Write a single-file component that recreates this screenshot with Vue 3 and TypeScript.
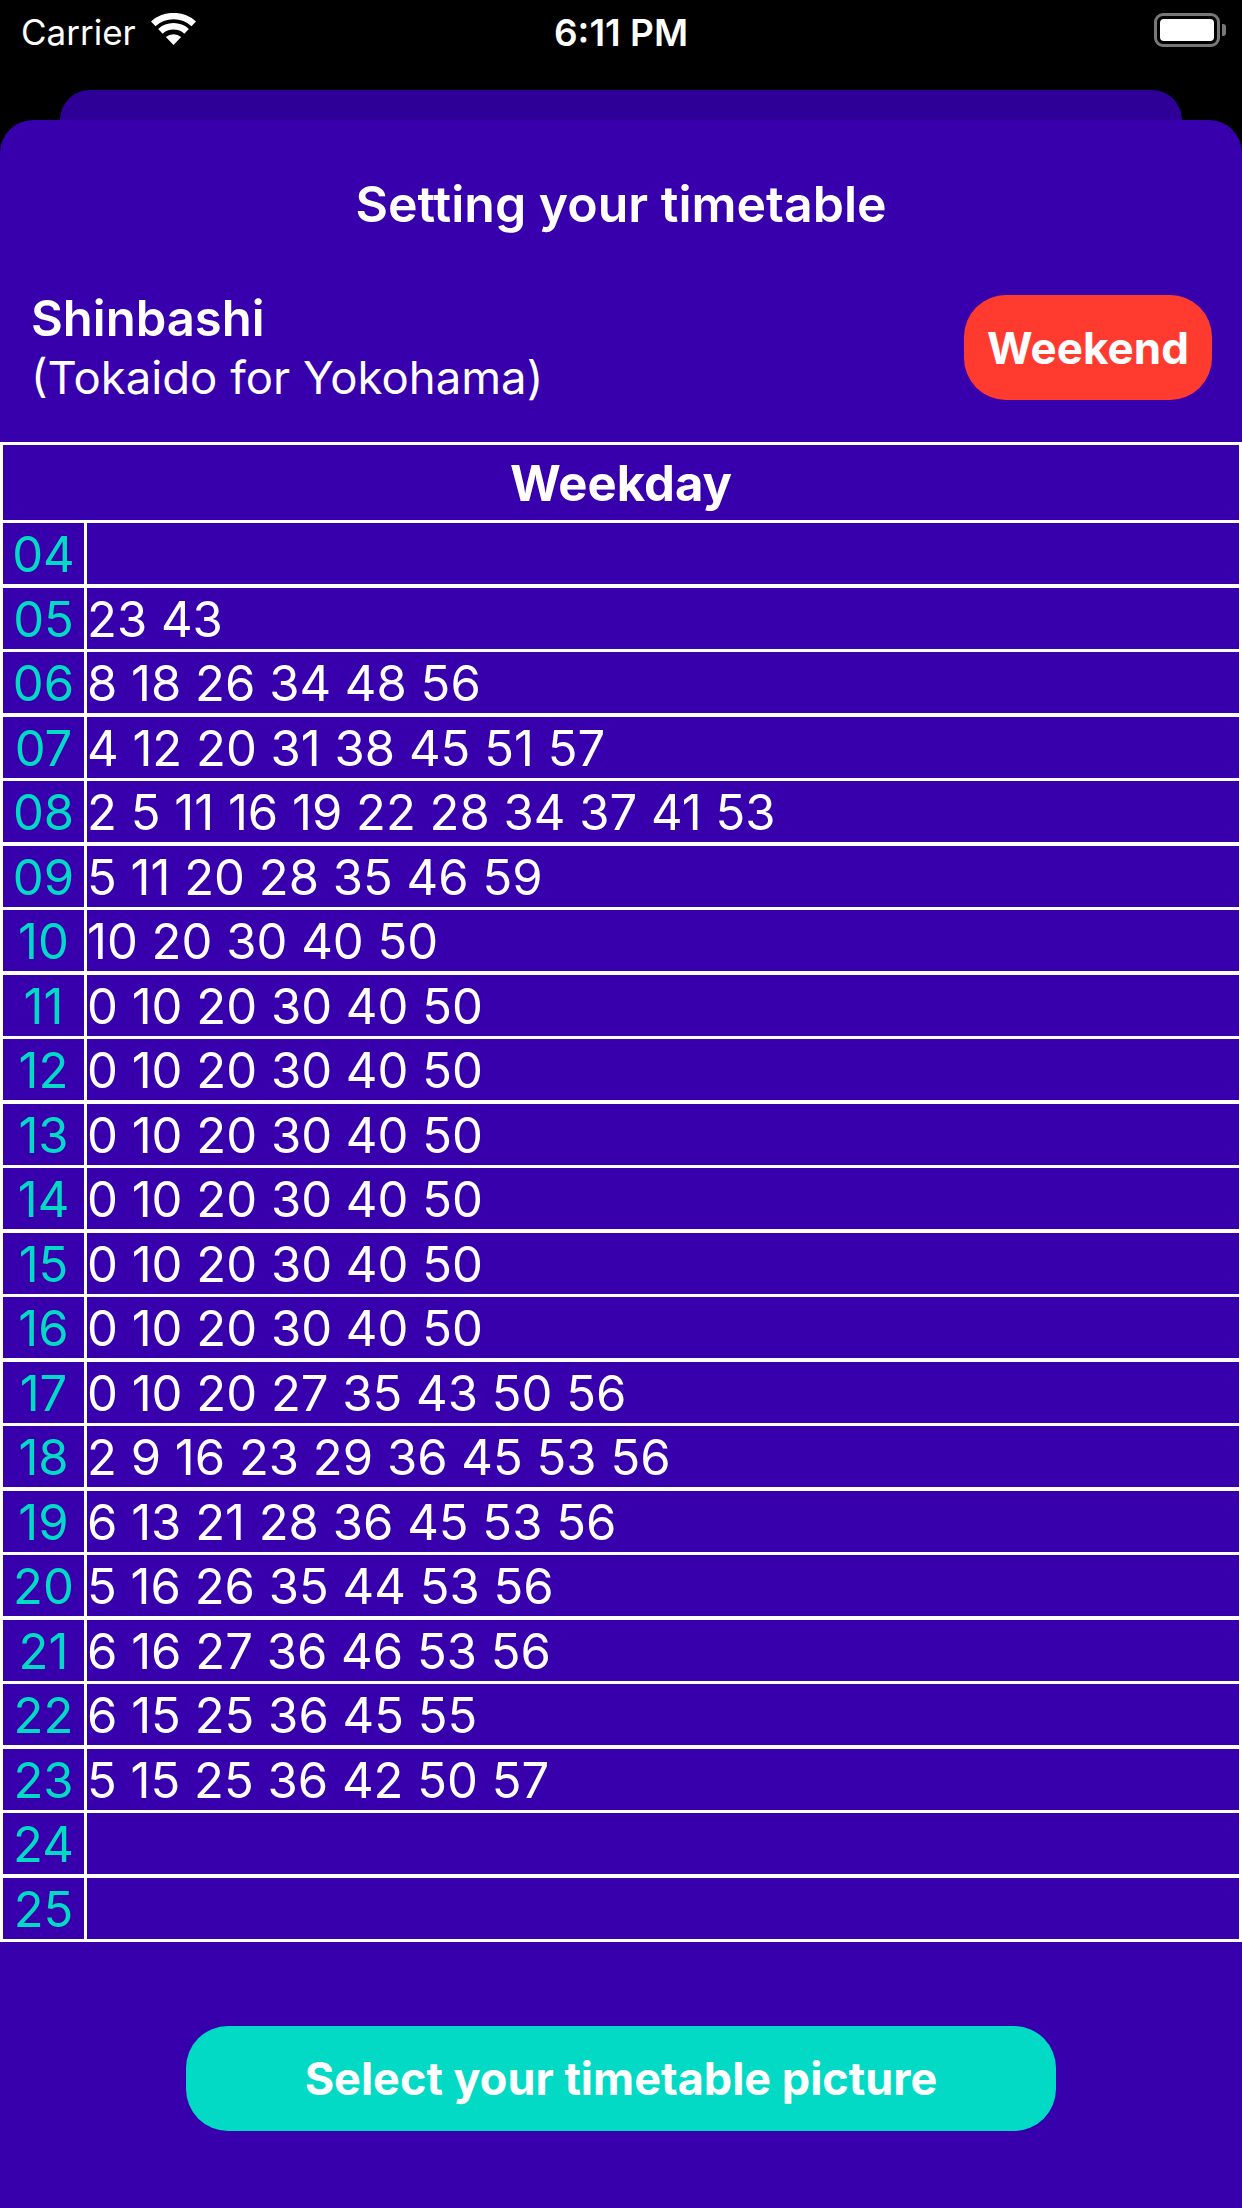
<template>
  <div class="screen">
    <div class="status-bar">
      <div class="status-left">
        <span>Carrier</span>
        <svg class="wifi" width="47" height="32" viewBox="0 0 46 34" preserveAspectRatio="none">
          <path d="M23 34 L15.5 25.5 A11 11 0 0 1 30.5 25.5 Z" fill="#fff" />
          <path d="M12.4 22 L8 17 A21 21 0 0 1 38 17 L33.6 22 A15 15 0 0 0 12.4 22 Z" fill="#fff" />
          <path d="M5.4 14 L1 9 A31 31 0 0 1 45 9 L40.6 14 A24.5 24.5 0 0 0 5.4 14 Z" fill="#fff" />
        </svg>
      </div>
      <span class="status-time">6:11 PM</span>
      <div class="battery">
        <div class="battery-body"><div class="battery-fill"></div></div>
        <div class="battery-nub"></div>
      </div>
    </div>

    <div class="sheet-behind"></div>

    <main class="sheet">
      <h1 class="title">Setting your timetable</h1>

      <div class="station-row">
        <div class="station">
          <div class="station-name">Shinbashi</div>
          <div class="station-line">(Tokaido for Yokohama)</div>
        </div>
        <button class="weekend-btn">Weekend</button>
      </div>

      <div class="timetable">
        <div class="day-header">Weekday</div>
        <div v-for="row in rows" :key="row.hour" class="row">
          <div class="hour">{{ row.hour }}</div>
          <div class="minutes">{{ row.minutes }}</div>
        </div>
      </div>

      <div class="footer">
        <button class="select-btn">Select your timetable picture</button>
      </div>
    </main>
  </div>
</template>

<script setup lang="ts">
interface Row {
  hour: string
  minutes: string
}

const rows: Row[] = [
  { hour: '04', minutes: '' },
  { hour: '05', minutes: '23 43' },
  { hour: '06', minutes: '8 18 26 34 48 56' },
  { hour: '07', minutes: '4 12 20 31 38 45 51 57' },
  { hour: '08', minutes: '2 5 11 16 19 22 28 34 37 41 53' },
  { hour: '09', minutes: '5 11 20 28 35 46 59' },
  { hour: '10', minutes: '10 20 30 40 50' },
  { hour: '11', minutes: '0 10 20 30 40 50' },
  { hour: '12', minutes: '0 10 20 30 40 50' },
  { hour: '13', minutes: '0 10 20 30 40 50' },
  { hour: '14', minutes: '0 10 20 30 40 50' },
  { hour: '15', minutes: '0 10 20 30 40 50' },
  { hour: '16', minutes: '0 10 20 30 40 50' },
  { hour: '17', minutes: '0 10 20 27 35 43 50 56' },
  { hour: '18', minutes: '2 9 16 23 29 36 45 53 56' },
  { hour: '19', minutes: '6 13 21 28 36 45 53 56' },
  { hour: '20', minutes: '5 16 26 35 44 53 56' },
  { hour: '21', minutes: '6 16 27 36 46 53 56' },
  { hour: '22', minutes: '6 15 25 36 45 55' },
  { hour: '23', minutes: '5 15 25 36 42 50 57' },
  { hour: '24', minutes: '' },
  { hour: '25', minutes: '' },
]
</script>

<style>
html, body { background: #000; }
</style>

<style scoped>
.screen {
  width: 1242px;
  height: 2208px;
  display: flex;
  flex-direction: column;
  background: #000;
  color: #fff;
  font-family: Inter, "Noto Sans", sans-serif;
  overflow: hidden;
}
.status-bar {
  height: 90px;
  flex: none;
  padding: 0 16px 26px 21px;
  box-sizing: border-box;
  display: grid;
  grid-template-columns: 1fr auto 1fr;
  align-items: center;
  font-size: 35px;
}
.status-left { display: flex; align-items: center; gap: 14px; }
.wifi { margin-top: -6px; }
.status-time { font-size: 37px; font-weight: 600; margin-left: -5px; }
.battery { justify-self: end; display: flex; align-items: center; gap: 2px; margin-top: -4px; }
.battery-body {
  width: 66px;
  height: 34px;
  box-sizing: border-box;
  border: 3px solid #777;
  border-radius: 9px;
  padding: 3px;
}
.battery-fill { width: 100%; height: 100%; background: #fff; border-radius: 4px; }
.battery-nub { width: 4px; height: 12px; background: #777; border-radius: 0 3px 3px 0; }
.sheet-behind {
  height: 30px;
  flex: none;
  margin: 0 60px;
  background: #2f0098;
  border-radius: 30px 30px 0 0;
}
.sheet {
  flex: 1;
  display: flex;
  flex-direction: column;
  background: #3800ad;
  border-radius: 33px 33px 0 0;
}
.title {
  margin: 54px 0 0;
  height: 60px;
  line-height: 60px;
  text-align: center;
  font-size: 50px;
  font-weight: 600;
}
.station-row {
  margin-top: 61px;
  height: 105px;
  padding: 0 30px 0 31px;
  display: flex;
  align-items: center;
  justify-content: space-between;
}
.station-name { font-size: 49px; font-weight: 600; line-height: 58px; padding-top: 1px; }
.station-line { font-size: 45.5px; font-weight: 400; line-height: 59px; }
.weekend-btn {
  width: 248px;
  height: 105px;
  border: none;
  border-radius: 42px;
  background: #ff3b30;
  color: #fff;
  font-family: inherit;
  font-size: 44px;
  font-weight: 700;
  padding: 0;
}
.timetable {
  margin-top: 42px;
  border-top: 3px solid #fff;
  border-left: 3px solid #fff;
  border-right: 3px solid #fff;
}
.day-header {
  height: 75px;
  line-height: 77px;
  border-bottom: 3px solid #fff;
  text-align: center;
  font-size: 49px;
  font-weight: 700;
}
.row {
  height: 64.5px;
  box-sizing: border-box;
  display: grid;
  grid-template-columns: 81px 1fr;
  border-bottom: 3px solid #fff;
  font-size: 49px;
  line-height: 63px;
}
.row:nth-child(even) { border-bottom-width: 4px; }
.hour {
  color: #03dac5;
  text-align: center;
  border-right: 3px solid #fff;
  font-weight: 400;
  margin-right: -3px;
  box-sizing: border-box;
}
.minutes { padding-left: 3px; font-weight: 400; }
.footer {
  padding-top: 84px;
  display: flex;
  justify-content: center;
}
.select-btn {
  width: 870px;
  height: 105px;
  border: none;
  border-radius: 42px;
  background: #03dac5;
  color: #fff;
  font-family: inherit;
  font-size: 45px;
  font-weight: 700;
  padding: 0;
}
</style>
